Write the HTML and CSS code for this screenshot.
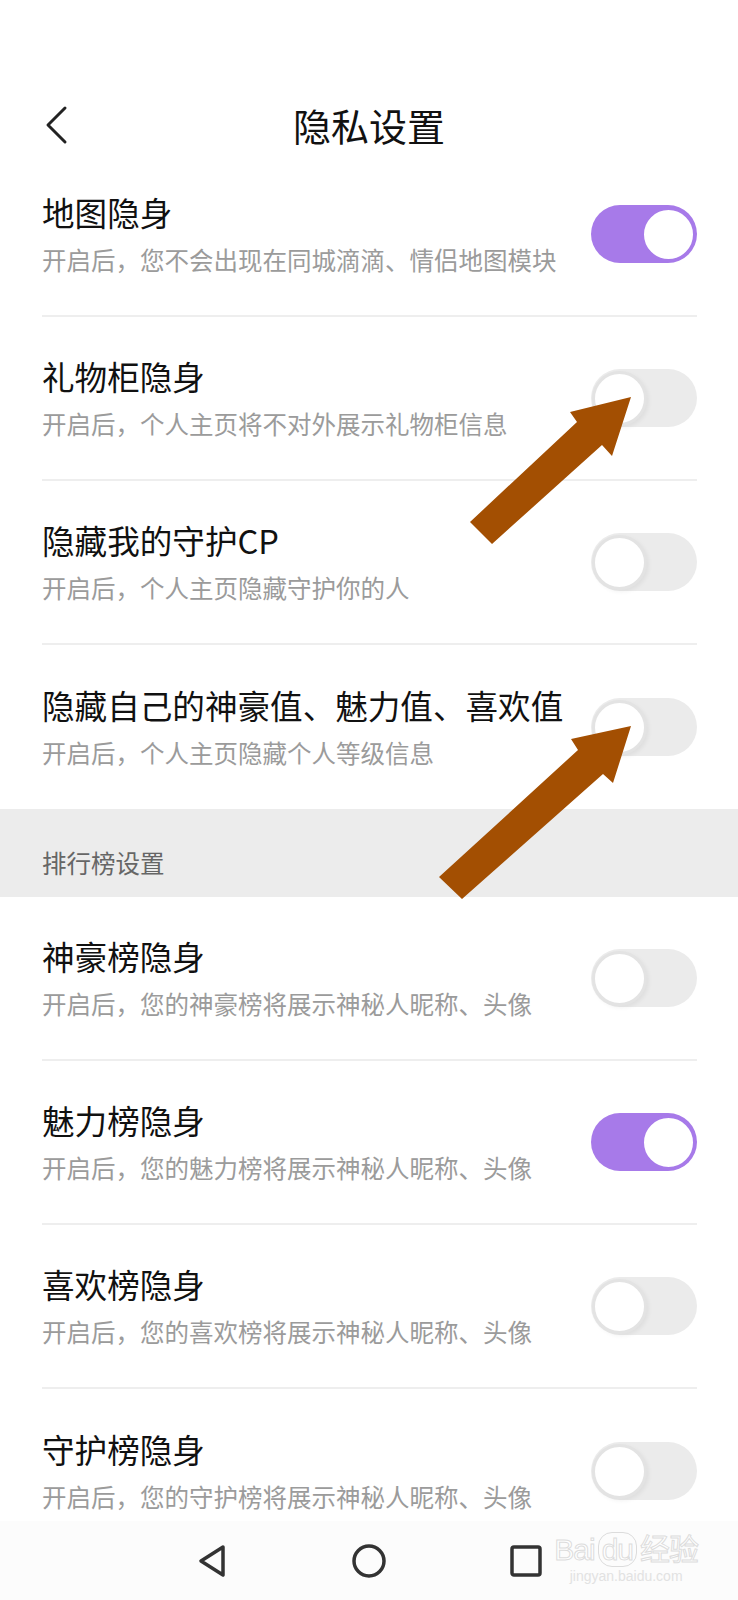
FILE: index.html
```html
<!DOCTYPE html>
<html lang="zh-CN">
  <head>
    <meta charset="UTF-8" />
    <meta name="viewport" content="width=device-width, initial-scale=1.0" />
    <title>隐私设置</title>
    <link rel="stylesheet" href="styles.css">
  </head>
  <body>
    <div class="phone">
      <header class="topbar">
        <div class="nav">
          <span class="back">
            <svg width="24" height="40" viewBox="0 0 24 40"><path d="M21 3 L4 20 L21 37" fill="none" stroke="#222" stroke-width="3" stroke-linecap="round" stroke-linejoin="round"/></svg>
          </span>
          <h1>隐私设置</h1>
          <span></span>
        </div>
      </header>

      <main class="content">
        <ul class="list">
          <li class="row">
            <div class="text">
              <div class="name">地图隐身</div>
              <div class="desc">开启后，您不会出现在同城滴滴、情侣地图模块</div>
            </div>
            <div class="switch on"><span class="knob"></span></div>
          </li>
          <li class="row">
            <div class="text">
              <div class="name">礼物柜隐身</div>
              <div class="desc">开启后，个人主页将不对外展示礼物柜信息</div>
            </div>
            <div class="switch"><span class="knob"></span></div>
          </li>
          <li class="row">
            <div class="text">
              <div class="name">隐藏我的守护CP</div>
              <div class="desc">开启后，个人主页隐藏守护你的人</div>
            </div>
            <div class="switch"><span class="knob"></span></div>
          </li>
          <li class="row">
            <div class="text">
              <div class="name">隐藏自己的神豪值、魅力值、喜欢值</div>
              <div class="desc">开启后，个人主页隐藏个人等级信息</div>
            </div>
            <div class="switch"><span class="knob"></span></div>
          </li>
        </ul>

        <div class="section">排行榜设置</div>

        <ul class="list">
          <li class="row">
            <div class="text">
              <div class="name">神豪榜隐身</div>
              <div class="desc">开启后，您的神豪榜将展示神秘人昵称、头像</div>
            </div>
            <div class="switch"><span class="knob"></span></div>
          </li>
          <li class="row">
            <div class="text">
              <div class="name">魅力榜隐身</div>
              <div class="desc">开启后，您的魅力榜将展示神秘人昵称、头像</div>
            </div>
            <div class="switch on"><span class="knob"></span></div>
          </li>
          <li class="row">
            <div class="text">
              <div class="name">喜欢榜隐身</div>
              <div class="desc">开启后，您的喜欢榜将展示神秘人昵称、头像</div>
            </div>
            <div class="switch"><span class="knob"></span></div>
          </li>
          <li class="row">
            <div class="text">
              <div class="name">守护榜隐身</div>
              <div class="desc">开启后，您的守护榜将展示神秘人昵称、头像</div>
            </div>
            <div class="switch"><span class="knob"></span></div>
          </li>
        </ul>
      </main>

      <nav class="sysbar">
        <svg width="32" height="34" viewBox="0 0 32 34"><path d="M27 3 L5 17 L27 31 Z" fill="none" stroke="#333" stroke-width="3.5" stroke-linejoin="round"/></svg>
        <svg width="34" height="34" viewBox="0 0 34 34"><circle cx="17" cy="17" r="15" fill="none" stroke="#333" stroke-width="3.5"/></svg>
        <svg width="32" height="34" viewBox="0 0 32 34"><rect x="2" y="3" width="28" height="28" rx="2" fill="none" stroke="#333" stroke-width="3.5"/></svg>
      </nav>

      <div class="watermark">
        <div class="wm-logo">Bai<span class="wm-du">du</span>经验</div>
        <div class="wm-url">jingyan.baidu.com</div>
      </div>

      <!-- annotation arrows drawn over the screenshot -->
      <svg class="marks" width="738" height="1600" viewBox="0 0 738 1600">
        <polygon points="631,397 612,456 602,445 492,544 470,522 577,422 570,412" fill="#a34f02"/>
        <polygon points="631,726 613,783 603,774 462,899 439,877 578,750 571,739" fill="#a34f02"/>
      </svg>
    </div>
  </body>
</html>
```

FILE: styles.css
```css
body {
  margin: 0;
  background: #fff;
  font-family: "Noto Sans CJK SC", "Noto Sans", sans-serif;
}
.phone {
  width: 738px;
  height: 1600px;
  position: relative;
  overflow: hidden;
  display: flex;
  flex-direction: column;
  background: #fff;
}
.topbar {
  height: 153px;
  padding-top: 97px;
  box-sizing: border-box;
  flex-shrink: 0;
}
.nav {
  height: 56px;
  display: grid;
  grid-template-columns: 1fr auto 1fr;
  align-items: center;
}
.back {
  padding-left: 44px;
  display: flex;
  align-items: center;
}
.nav h1 {
  margin: 0;
  font-size: 38px;
  font-weight: 400;
  color: #111;
  line-height: 56px;
}
.content {
  flex: 1;
  overflow: hidden;
}
.list {
  list-style: none;
  margin: 0;
  padding: 0 41px 0 42px;
}
.row {
  height: 164px;
  box-sizing: border-box;
  display: flex;
  align-items: center;
  border-bottom: 2px solid #eeeeee;
}
.row:last-child {
  border-bottom: none;
}
.text {
  flex: 1;
  display: flex;
  flex-direction: column;
  gap: 12px;
  white-space: nowrap;
}
.name {
  font-size: 32.6px;
  line-height: 40px;
  color: #111;
}
.desc {
  font-size: 24.5px;
  line-height: 32px;
  color: #9b9b9b;
}
.switch {
  width: 106px;
  height: 58px;
  border-radius: 29px;
  background: #ebebeb;
  display: flex;
  align-items: center;
  padding: 0 1px;
  box-sizing: border-box;
  flex-shrink: 0;
}
.knob {
  width: 55px;
  height: 55px;
  border-radius: 50%;
  background: #fff;
  border: 3px solid #e3e3e3;
  box-sizing: border-box;
  box-shadow: 2px 2px 4px rgba(0, 0, 0, 0.05);
}
.switch.on {
  background: #a77ae9;
  justify-content: flex-end;
}
.switch.on .knob {
  border-color: #a77ae9;
  box-shadow: none;
}
.section {
  height: 88px;
  box-sizing: border-box;
  padding: 38px 42px 0;
  background: #ececec;
  font-size: 24.5px;
  line-height: 32px;
  color: #666;
}
.sysbar {
  height: 79px;
  flex-shrink: 0;
  background: #fcfcfc;
  display: flex;
  justify-content: center;
  align-items: center;
  gap: 124px;
}
.watermark {
  position: absolute;
  right: 40px;
  bottom: 16px;
  color: #fff;
  text-align: center;
  font-family: "Liberation Sans", sans-serif;
  -webkit-text-stroke: 1px #dcdcdc;
}
.wm-logo {
  font-size: 30px;
  line-height: 36px;
  letter-spacing: -1px;
}
.wm-du {
  border: 1px solid #dcdcdc;
  border-radius: 14px;
  padding: 0 3px;
  margin: 0 3px;
}
.wm-url {
  font-size: 14px;
  line-height: 16px;
  color: #e2e2e2;
  -webkit-text-stroke: 0;
}
.marks {
  position: absolute;
  top: 0;
  left: 0;
  pointer-events: none;
}
```
